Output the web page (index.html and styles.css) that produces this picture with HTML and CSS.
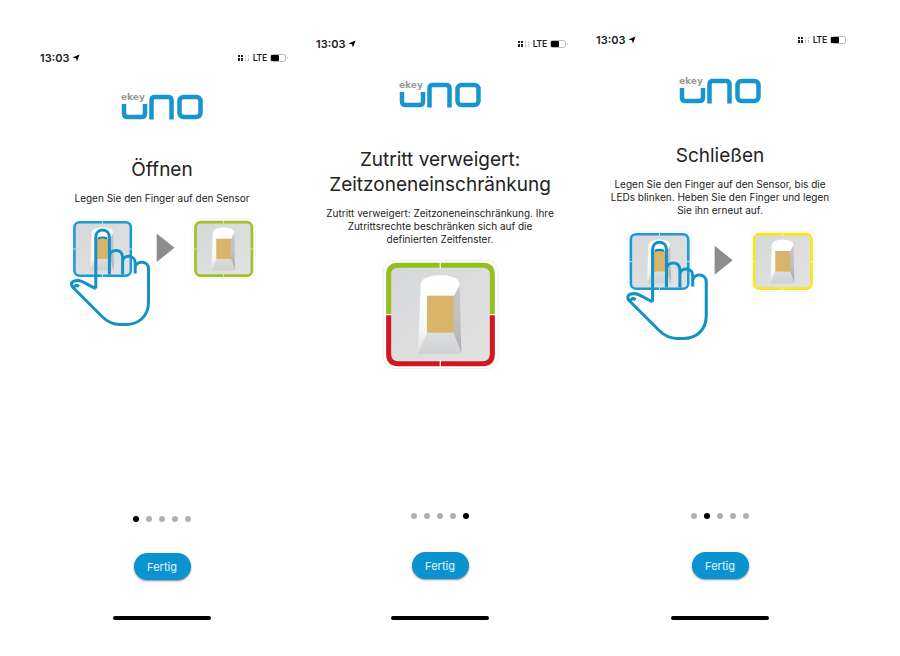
FILE: index.html
```html
<!DOCTYPE html>
<html lang="de">
<head>
<meta charset="utf-8">
<meta name="viewport" content="width=device-width, initial-scale=1">
<title>ekey uno</title>
<link rel="stylesheet" href="styles.css">
</head>
<body>
<svg class="defs" aria-hidden="true">
  <defs>
    <linearGradient id="plate" x1="0" y1="0" x2="1" y2="1">
      <stop offset="0" stop-color="#d6d7d8"/><stop offset="1" stop-color="#e2e2e3"/>
    </linearGradient>
    <linearGradient id="left" x1="0" y1="0" x2="0" y2="1">
      <stop offset="0" stop-color="#fff"/><stop offset=".7" stop-color="#f6f6f7"/><stop offset="1" stop-color="#dedfe0"/>
    </linearGradient>
    <linearGradient id="right" x1="0" y1="0" x2="0" y2="1">
      <stop offset="0" stop-color="#c6c7c9"/><stop offset=".5" stop-color="#c0c1c3"/><stop offset="1" stop-color="#adaeb1"/>
    </linearGradient>
    <linearGradient id="foot" x1="0" y1="0" x2="0" y2="1">
      <stop offset="0" stop-color="#dcddde"/><stop offset="1" stop-color="#d0d1d3"/>
    </linearGradient>
    <g id="scanner">
      <rect x="217" y="358" width="346" height="326" rx="36" fill="#fff" stroke="#eceded" stroke-width="3"/>
      <rect x="232" y="372" width="315" height="299" rx="28" fill="url(#plate)"/>
      <path d="M330 430L350 465V575L322 636Z" fill="url(#left)"/>
      <path d="M447 430L428 465V575L452 638Z" fill="url(#right)"/>
      <path d="M350 575H428L450 640H322Z" fill="url(#foot)"/>
      <path d="M330 434Q330 420 344 412Q388 394 434 412Q447 420 447 434L429 467H349Z" fill="#fff"/>
      <rect x="349" y="465" width="80" height="111" fill="#d9b56c"/>
    </g>
    <g id="ticks" stroke="#f3f5f6" stroke-width="4">
      <path d="M389 364V384M389 659V679M225 522H243M536 522H554"/>
    </g>
    <g id="pair">
      <g transform="translate(31.5 153.7) scale(.1826)">
        <use href="#scanner"/>
        <rect x="235" y="375" width="309" height="293" rx="28" fill="none" stroke="#1c9bd3" stroke-width="14"/>
        <use href="#ticks"/>
      </g>
      <path d="M156.7 233.5L174.5 247.7L156.7 262Z" fill="#8b8d8f"/>
      <path d="M98 238.5Q102.5 236.5 107 238.5" fill="none" stroke="#0c80b5" stroke-width="2"/>
      <path d="M95.8 288.5V237.5C95.8 227.5 109.4 227.5 109.4 237.5V274.5M109.4 256C110 249 122.6 247.500 122.600 257.500V274.500M122.600 261C124 254.500 135.200 254.500 135.200 263V273.500M135.200 267C137 260 148.500 260.500 148.500 269V302C148.500 316 139 324.500 126 324.500H120C112 324.500 107 321.500 102 316.500L73 287.500C69.500 283.500 72.500 280.500 77.500 280.500C83.500 280.500 87 285 95.800 288.500M75 287.500C74.500 285.500 76.500 284.500 79 286.500" fill="none" stroke="#1292c9" stroke-width="3" stroke-linejoin="round"/>
    </g>
    <g id="target" transform="translate(152.6 153.7) scale(.1826)">
      <use href="#scanner"/>
      <rect x="235" y="375" width="309" height="293" rx="28" fill="none" stroke="currentColor" stroke-width="15"/>
      <use href="#ticks"/>
    </g>
    <g id="uno">
      <g fill="none" stroke="#1795cc" stroke-width="4.500">
        <path d="M3 10V19.500Q3 23 6.500 23H20.500Q24 23 24 19.500V10"/>
        <path d="M30.500 25.500V6.500Q30.500 3 34 3H47Q50.500 3 50.500 6.500V25.500"/>
        <rect x="58.500" y="3" width="21" height="20" rx="4"/>
      </g>
      <text class="brand" x="0" y="6">ekey</text>
    </g>
    <g id="locate"><path d="M.5 4L8.500 .5L5.500 8.500L4.500 4.800Z"/></g>
    <g id="signal">
      <g fill="#222"><path d="M0 0h2v2h-2zM3 0h2v2h-2zM0 3h2v3h-2zM3 3h2v3h-2z"/></g>
      <g fill="#c8c8c8"><path d="M7 0h1v2h-1zM10 0h1v2h-1zM7 3h1v3h-1zM10 3h1v3h-1z"/></g>
    </g>
    <g id="battery">
      <rect x=".5" y=".5" width="15" height="7" rx="2" fill="#fff" stroke="#bbb"/>
      <rect x="1" y="1" width="8" height="6" rx="1" fill="#000"/>
      <path d="M17 3Q18.500 4 17 5Z" fill="#999"/>
    </g>
  </defs>
</svg>

<main class="screens">
  <section class="screen screen-open">
    <header class="status">
      <span class="time">13:03</span><svg class="locate" viewBox="0 0 9 9"><use href="#locate"/></svg>
      <svg class="signal" viewBox="0 0 12 6"><use href="#signal"/></svg><span class="network">LTE</span><svg class="battery" viewBox="0 0 18 8"><use href="#battery"/></svg>
    </header>
    <svg class="logo" viewBox="0 0 82 26" role="img" aria-label="ekey uno"><use href="#uno"/></svg>
    <h1>Öffnen</h1>
    <p>Legen Sie den Finger auf den Sensor</p>
    <svg class="figure" viewBox="68 218 188 110"><use href="#pair"/><use class="green" href="#target"/></svg>
    <footer>
      <div class="dots"><i class="on"></i><i></i><i></i><i></i><i></i></div>
      <button type="button">Fertig</button>
      <div class="home"></div>
    </footer>
  </section>

  <section class="screen screen-denied">
    <header class="status">
      <span class="time">13:03</span><svg class="locate" viewBox="0 0 9 9"><use href="#locate"/></svg>
      <svg class="signal" viewBox="0 0 12 6"><use href="#signal"/></svg><span class="network">LTE</span><svg class="battery" viewBox="0 0 18 8"><use href="#battery"/></svg>
    </header>
    <svg class="logo" viewBox="0 0 82 26" role="img" aria-label="ekey uno"><use href="#uno"/></svg>
    <h1>Zutritt verweigert: Zeitzoneneinschränkung</h1>
    <p>Zutritt verweigert: Zeitzoneneinschränkung. Ihre Zutrittsrechte beschränken sich auf die definierten Zeitfenster.</p>
    <svg class="figure figure-large" viewBox="214 355 351 330">
      <use href="#scanner"/>
      <g fill="none" stroke-width="15">
        <path d="M234 521V402Q234 374 262 374H517Q545 374 545 402V521" stroke="#93c01f"/>
        <path d="M234 521V641Q234 669 262 669H517Q545 669 545 641V521" stroke="#d01722"/>
      </g>
      <use href="#ticks"/>
    </svg>
    <footer>
      <div class="dots"><i></i><i></i><i></i><i></i><i class="on"></i></div>
      <button type="button">Fertig</button>
      <div class="home"></div>
    </footer>
  </section>

  <section class="screen screen-close">
    <header class="status">
      <span class="time">13:03</span><svg class="locate" viewBox="0 0 9 9"><use href="#locate"/></svg>
      <svg class="signal" viewBox="0 0 12 6"><use href="#signal"/></svg><span class="network">LTE</span><svg class="battery" viewBox="0 0 18 8"><use href="#battery"/></svg>
    </header>
    <svg class="logo" viewBox="0 0 82 26" role="img" aria-label="ekey uno"><use href="#uno"/></svg>
    <h1>Schließen</h1>
    <p>Legen Sie den Finger auf den Sensor, bis die LEDs blinken. Heben Sie den Finger und legen Sie ihn erneut auf.</p>
    <svg class="figure figure-wide" viewBox="68 218 188 110"><use href="#pair"/><use class="yellow" href="#target"/></svg>
    <footer>
      <div class="dots"><i></i><i class="on"></i><i></i><i></i><i></i></div>
      <button type="button">Fertig</button>
      <div class="home"></div>
    </footer>
  </section>
</main>
</body>
</html>
```

FILE: styles.css
```css
* { box-sizing: border-box; }

body {
  margin: 0;
  background: #fff;
  color: #222;
  font-family: Inter, "Liberation Sans", sans-serif;
}

.defs { position: absolute; width: 0; height: 0; }

.screens {
  display: grid;
  grid-template-columns: 276fr 280fr 280fr;
  min-height: 100vh;
  padding: 0 40px 0 24px;
}

.screen {
  display: flex;
  flex-direction: column;
  align-items: center;
  padding-bottom: 36px;
}

.screen-open { padding-top: 50px; }
.screen-denied { padding-top: 36px; }
.screen-close { padding-top: 32px; }

.status {
  display: flex;
  align-items: center;
  align-self: stretch;
  height: 16px;
  padding: 0 12px 0 16px;
}

.time { font-size: 11px; font-weight: 600; }
.locate { width: 8px; height: 8px; margin-left: 3px; }
.signal { width: 12px; height: 6px; margin-left: auto; }
.network { margin: 0 3px; font: 500 9px Roboto, "Liberation Sans", sans-serif; }
.battery { width: 18px; height: 8px; }

.logo {
  width: 82px;
  height: 26px;
  margin: 30px 0 39px;
  overflow: visible;
}

.screen-open .logo { margin: 28px 0 37px; }

.brand {
  fill: #9a9a9a;
  font: bold 9px "DejaVu Sans", sans-serif;
}

h1 {
  max-width: 240px;
  margin: 0 0 10px;
  font-size: 19px;
  font-weight: 400;
  line-height: 25px;
  text-align: center;
}

p {
  max-width: 232px;
  margin: 0 0 13px;
  font-size: 10px;
  line-height: 13px;
  text-align: center;
}

.figure { width: 188px; height: 110px; }
.figure-wide { width: 192px; height: 112px; }
.figure-large { width: 117px; height: 110px; }
.green { color: #9fc227; }
.yellow { color: #fbe620; }

footer {
  display: flex;
  flex-direction: column;
  align-items: center;
  margin-top: auto;
}

.dots { display: flex; gap: 7px; }
.dots i { width: 6px; height: 6px; border-radius: 50%; background: #b0b0b0; }
.dots .on { background: #000; }

button {
  width: 57px;
  height: 27px;
  margin: 33px 0 37px;
  padding: 0;
  border: 0;
  border-radius: 14px;
  background: #0b93cf;
  box-shadow: 0 1px 2px #0007;
  color: #e8f5fb;
  font: 11px Inter, "Liberation Sans", sans-serif;
}

.screen-open button { margin: 31px 0 36px; }

.home { width: 98px; height: 4px; border-radius: 2px; background: #000; }
```
